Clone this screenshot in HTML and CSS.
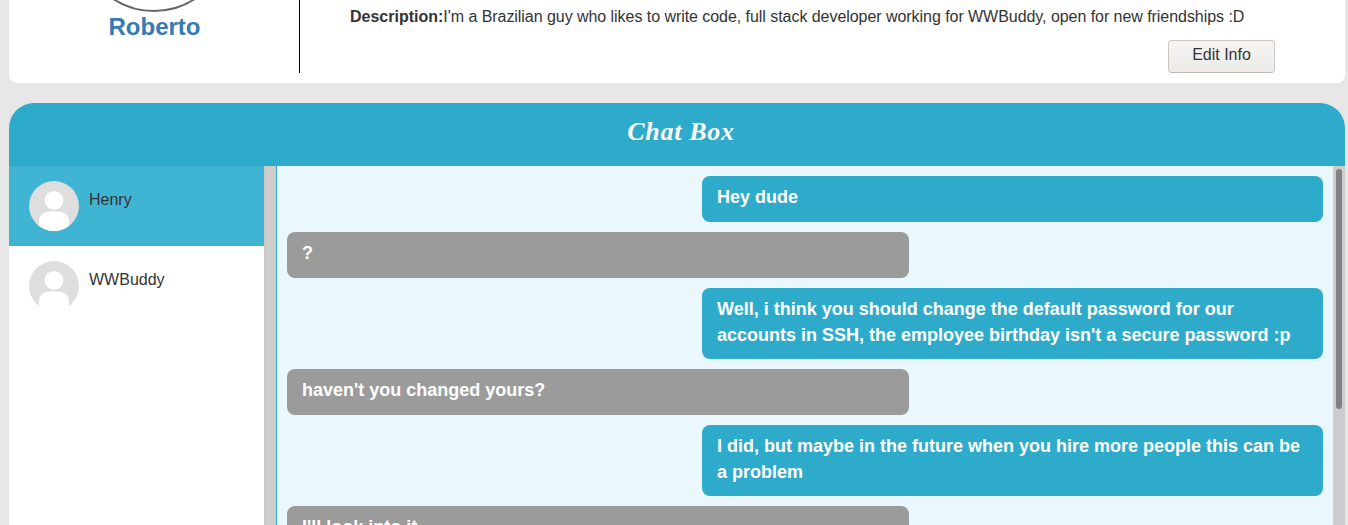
FILE: index.html
```html
<!DOCTYPE html>
<html lang="en">
<head>
<meta charset="utf-8">
<title>Profile</title>
<link rel="stylesheet" href="styles.css">
</head>
<body>
<section class="profile">
  <div class="identity">
    <div class="portrait"></div>
    <h2 class="name">Roberto</h2>
  </div>
  <div class="info">
    <p class="description"><b>Description:</b><span class="bio">I'm a Brazilian guy who likes to write code, full stack developer working for WWBuddy, open for new friendships :D</span></p>
    <button class="edit">Edit Info</button>
  </div>
</section>
<section class="chat">
  <header class="chat-header"><h1 class="chat-title">Chat Box</h1></header>
  <div class="chat-body">
    <nav class="contacts">
      <div class="contact active">
        <svg class="avatar" viewBox="0 0 50 50"><circle cx="25" cy="25" r="25" fill="#dedede"/><circle cx="25" cy="19.3" r="9.3" fill="#fff"/><path d="M10 45V41C10 33 15 30.2 25 30.2S40 33 40 41V45A25 25 0 0 1 10 45Z" fill="#fff"/></svg>
        <span class="contact-name">Henry</span>
      </div>
      <div class="contact">
        <svg class="avatar" viewBox="0 0 50 50"><circle cx="25" cy="25" r="25" fill="#dedede"/><circle cx="25" cy="19.3" r="9.3" fill="#fff"/><path d="M10 50V41C10 33 15 30.2 25 30.2S40 33 40 41V50Z" fill="#fff"/></svg>
        <span class="contact-name">WWBuddy</span>
      </div>
    </nav>
    <div class="track track-left"></div>
    <main class="messages">
      <div class="message sent">Hey dude</div>
      <div class="message">?</div>
      <div class="message sent">Well, i think you should change the default password for our accounts in SSH, the employee birthday isn't a secure password :p</div>
      <div class="message">haven't you changed yours?</div>
      <div class="message sent">I did, but maybe in the future when you hire more people this can be a problem</div>
      <div class="message">I'll look into it</div>
    </main>
    <div class="track"><div class="thumb"></div></div>
  </div>
</section>
</body>
</html>
```
FILE: styles.css
```css
* { box-sizing: border-box; }
body {
  margin: 0;
  padding: 0 3px 0 9px;
  height: 525px;
  overflow: hidden;
  background: #e7e7e7;
  color: #333;
  font: 16px/1.42857 "Liberation Sans", Arial, sans-serif;
}
.profile {
  display: flex;
  height: 83px;
  background: #fff;
  border-radius: 0 0 8px 8px;
  overflow: hidden;
}
.identity {
  width: 291px;
  height: 73px;
  border-right: 1px solid #000;
  display: flex;
  flex-direction: column;
  align-items: center;
}
.portrait {
  flex: none;
  width: 150px;
  height: 150px;
  margin-top: -138px;
  border: 2px solid #666;
  border-radius: 50%;
}
.name {
  margin: -2px 0 0 1px;
  color: #337ab7;
  font-size: 24px;
  line-height: 34px;
}
.info {
  flex: 1;
  display: flex;
  flex-direction: column;
  padding: 6px 70px 0 50px;
}
.description { margin: 0; white-space: nowrap; }
.bio { letter-spacing: -0.05px; }
.edit {
  align-self: flex-end;
  width: 107px;
  height: 33px;
  margin-top: 11px;
  padding: 0 0 1px;
  border: 1px solid #cdc7c2;
  border-bottom-color: #bfb8b1;
  border-radius: 4px;
  background: linear-gradient(#f6f5f4, #edebe9);
  color: #333;
  font: inherit;
}
.chat { margin-top: 20px; }
.chat-header {
  height: 63px;
  display: flex;
  justify-content: center;
  background: #2eabca;
  border-radius: 25px 25px 0 0;
}
.chat-title {
  margin: 0;
  padding: 11px 0 0 8px;
  color: #fff;
  font: italic bold 26px/36px "Z003", "URW Chancery L", "Monotype Corsiva", "Liberation Serif", cursive;
  letter-spacing: 0.7px;
}
.chat-body { display: flex; height: 359px; }
.contacts { width: 255px; background: #fff; }
.contact {
  display: flex;
  gap: 10px;
  height: 80px;
  padding: 15px 20px;
}
.active { background: #3fb4d3; }
.avatar { width: 50px; height: 50px; }
.contact-name { padding-top: 8px; }
.track {
  width: 12px;
  padding: 3px 3px 0;
  background: #cdcdcd;
}
.track-left { border-left: 1px solid #c8c5c2; }
.thumb {
  width: 6px;
  height: 240px;
  border-radius: 3px;
  background: #7e8181;
}
.messages {
  flex: 1;
  display: flex;
  flex-direction: column;
  align-items: flex-start;
  gap: 10px;
  padding: 10.4px 10px 10px;
  border-left: 1px solid #2eabca;
  background: #eaf8fe;
  overflow: hidden;
}
.message {
  flex: none;
  width: 60%;
  padding: 9px 15px 11px;
  border-radius: 8px;
  background: #9b9b9b;
  color: #fff;
  font-size: 18px;
  font-weight: bold;
}
.sent {
  align-self: flex-end;
  width: 621px;
  background: #2eabca;
}
```
